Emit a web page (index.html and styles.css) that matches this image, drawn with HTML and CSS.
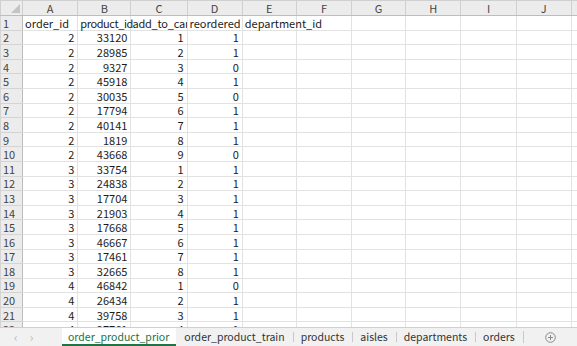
FILE: index.html
```html
<!DOCTYPE html>
<html lang="en">
<head>
  <meta charset="UTF-8" />
  <title>order_product_prior</title>
  <link rel="stylesheet" href="styles.css">
</head>
<body>
  <div class="book">
    <div class="sheet">
      <table class="grid">
        <colgroup>
          <col class="c-rh"><col style="width:55px"><col style="width:53px"><col style="width:56px"><col style="width:55px"><col style="width:54px"><col style="width:55px"><col style="width:54px"><col style="width:55px"><col style="width:55px"><col style="width:55px"><col style="width:55px">
        </colgroup>
        <thead>
          <tr class="colhead">
            <th class="corner"><span class="tri"></span></th>
            <th>A</th><th>B</th><th>C</th><th>D</th><th>E</th><th>F</th><th>G</th><th>H</th><th>I</th><th>J</th><th></th>
          </tr>
        </thead>
        <tbody>
          <tr><th>1</th><td class="txt">order_id</td><td class="txt spill head-b">product_id</td><td class="txt head-c">add_to_car</td><td class="txt">reordered</td><td class="txt spill">department_id</td><td></td><td></td><td></td><td></td><td></td><td></td></tr>
          <tr><th>2</th><td>2</td><td>33120</td><td>1</td><td>1</td><td></td><td></td><td></td><td></td><td></td><td></td><td></td></tr>
          <tr><th>3</th><td>2</td><td>28985</td><td>2</td><td>1</td><td></td><td></td><td></td><td></td><td></td><td></td><td></td></tr>
          <tr><th>4</th><td>2</td><td>9327</td><td>3</td><td>0</td><td></td><td></td><td></td><td></td><td></td><td></td><td></td></tr>
          <tr><th>5</th><td>2</td><td>45918</td><td>4</td><td>1</td><td></td><td></td><td></td><td></td><td></td><td></td><td></td></tr>
          <tr><th>6</th><td>2</td><td>30035</td><td>5</td><td>0</td><td></td><td></td><td></td><td></td><td></td><td></td><td></td></tr>
          <tr><th>7</th><td>2</td><td>17794</td><td>6</td><td>1</td><td></td><td></td><td></td><td></td><td></td><td></td><td></td></tr>
          <tr><th>8</th><td>2</td><td>40141</td><td>7</td><td>1</td><td></td><td></td><td></td><td></td><td></td><td></td><td></td></tr>
          <tr><th>9</th><td>2</td><td>1819</td><td>8</td><td>1</td><td></td><td></td><td></td><td></td><td></td><td></td><td></td></tr>
          <tr><th>10</th><td>2</td><td>43668</td><td>9</td><td>0</td><td></td><td></td><td></td><td></td><td></td><td></td><td></td></tr>
          <tr><th>11</th><td>3</td><td>33754</td><td>1</td><td>1</td><td></td><td></td><td></td><td></td><td></td><td></td><td></td></tr>
          <tr><th>12</th><td>3</td><td>24838</td><td>2</td><td>1</td><td></td><td></td><td></td><td></td><td></td><td></td><td></td></tr>
          <tr><th>13</th><td>3</td><td>17704</td><td>3</td><td>1</td><td></td><td></td><td></td><td></td><td></td><td></td><td></td></tr>
          <tr><th>14</th><td>3</td><td>21903</td><td>4</td><td>1</td><td></td><td></td><td></td><td></td><td></td><td></td><td></td></tr>
          <tr><th>15</th><td>3</td><td>17668</td><td>5</td><td>1</td><td></td><td></td><td></td><td></td><td></td><td></td><td></td></tr>
          <tr><th>16</th><td>3</td><td>46667</td><td>6</td><td>1</td><td></td><td></td><td></td><td></td><td></td><td></td><td></td></tr>
          <tr><th>17</th><td>3</td><td>17461</td><td>7</td><td>1</td><td></td><td></td><td></td><td></td><td></td><td></td><td></td></tr>
          <tr><th>18</th><td>3</td><td>32665</td><td>8</td><td>1</td><td></td><td></td><td></td><td></td><td></td><td></td><td></td></tr>
          <tr><th>19</th><td>4</td><td>46842</td><td>1</td><td>0</td><td></td><td></td><td></td><td></td><td></td><td></td><td></td></tr>
          <tr><th>20</th><td>4</td><td>26434</td><td>2</td><td>1</td><td></td><td></td><td></td><td></td><td></td><td></td><td></td></tr>
          <tr><th>21</th><td>4</td><td>39758</td><td>3</td><td>1</td><td></td><td></td><td></td><td></td><td></td><td></td><td></td></tr>
          <tr><th>22</th><td>4</td><td>27761</td><td>4</td><td>1</td><td></td><td></td><td></td><td></td><td></td><td></td><td></td></tr>
        </tbody>
      </table>
    </div>

    <div class="tabbar">
      <div class="nav">
        <span class="arrow">&lsaquo;</span>
        <span class="arrow">&rsaquo;</span>
      </div>
      <div class="tabs">
        <span class="tab active">order_product_prior</span>
        <span class="tab">order_product_train</span>
        <span class="tab">products</span>
        <span class="tab">aisles</span>
        <span class="tab">departments</span>
        <span class="tab">orders</span>
      </div>
      <span class="add-sheet">
        <svg width="11" height="11" viewBox="0 0 11 11">
          <circle cx="5.5" cy="5.5" r="4.8" fill="none" stroke="#8a8a8a" stroke-width="1"/>
          <path d="M5.5 3v5M3 5.5h5" stroke="#8a8a8a" stroke-width="1"/>
        </svg>
      </span>
    </div>
  </div>
</body>
</html>
```

FILE: styles.css
```css
* {
  box-sizing: border-box;
}
html, body {
  margin: 0;
  background: #fff;
}
body {
  font-family: "Noto Sans CJK SC", "Noto Sans", sans-serif;
  color: #1c1c1c;
  width: 577px;
  height: 346px;
  overflow: hidden;
}

.book {
  height: 346px;
  display: flex;
  flex-direction: column;
}

.sheet {
  flex: 1;
  overflow: hidden;
}

.grid {
  table-layout: fixed;
  border-collapse: collapse;
  width: 627px;
  font-size: 11px;
  line-height: 12px;
}
.c-rh {
  width: 22px;
}

.grid th,
.grid td {
  padding: 0 3px;
  white-space: nowrap;
  height: 14.6px;
  border: 1px solid #e2e2e2;
  font-weight: normal;
}
.grid td {
  text-align: right;
  overflow: hidden;
}
.grid td.txt {
  text-align: left;
  padding-left: 2px;
}
.grid td.spill {
  overflow: visible;
}
/* header texts run into each other, C is clipped by D */
.grid td.head-b {
  letter-spacing: -0.4px;
}
.grid td.head-c {
  padding-left: 1px;
  letter-spacing: -0.2px;
}

/* headers */
.colhead th {
  height: 15px;
  background: #ececec;
  color: #444;
  text-align: center;
  border-color: #d0d0d0;
  border-bottom-color: #bdbdbd;
}
.grid tbody th {
  background: #ececec;
  color: #444;
  text-align: left;
  padding-left: 2px;
  border-color: #d4d4d4;
  border-right-color: #bdbdbd;
}
.corner {
  position: relative;
}
.tri {
  position: absolute;
  right: 2px;
  bottom: 2px;
  width: 0;
  height: 0;
  border-left: 9px solid transparent;
  border-bottom: 9px solid #c4c4c4;
}

/* sheet tabs */
.tabbar {
  height: 19px;
  flex-shrink: 0;
  display: flex;
  align-items: stretch;
  background: #f1f1f1;
  border-top: 1px solid #cfcfcf;
  font-size: 10.5px;
  line-height: 14px;
  color: #333;
}
.nav {
  width: 62px;
  display: flex;
  align-items: center;
  gap: 12px;
  padding-left: 14px;
  color: #b8b8b8;
  font-size: 12px;
}
.tabs {
  display: flex;
  align-items: stretch;
}
.tab {
  display: flex;
  align-items: center;
  padding: 0 8px;
  position: relative;
}
.tab + .tab::before {
  content: "";
  position: absolute;
  left: 0;
  top: 4px;
  bottom: 4px;
  border-left: 1px solid #c8c8c8;
}
.tab::after {
  content: "";
}
.tab:last-child {
  border-right: 1px solid #c8c8c8;
  border-image: linear-gradient(transparent 4px, #c8c8c8 4px, #c8c8c8 calc(100% - 4px), transparent calc(100% - 4px)) 1;
}
.tab.active {
  background: #fff;
  color: #217346;
  border-bottom: 2px solid #217346;
  padding: 2px 7px 0 6px;
}
.tab.active + .tab::before {
  display: none;
}
.add-sheet {
  display: flex;
  align-items: center;
  margin-left: 21px;
}
```
